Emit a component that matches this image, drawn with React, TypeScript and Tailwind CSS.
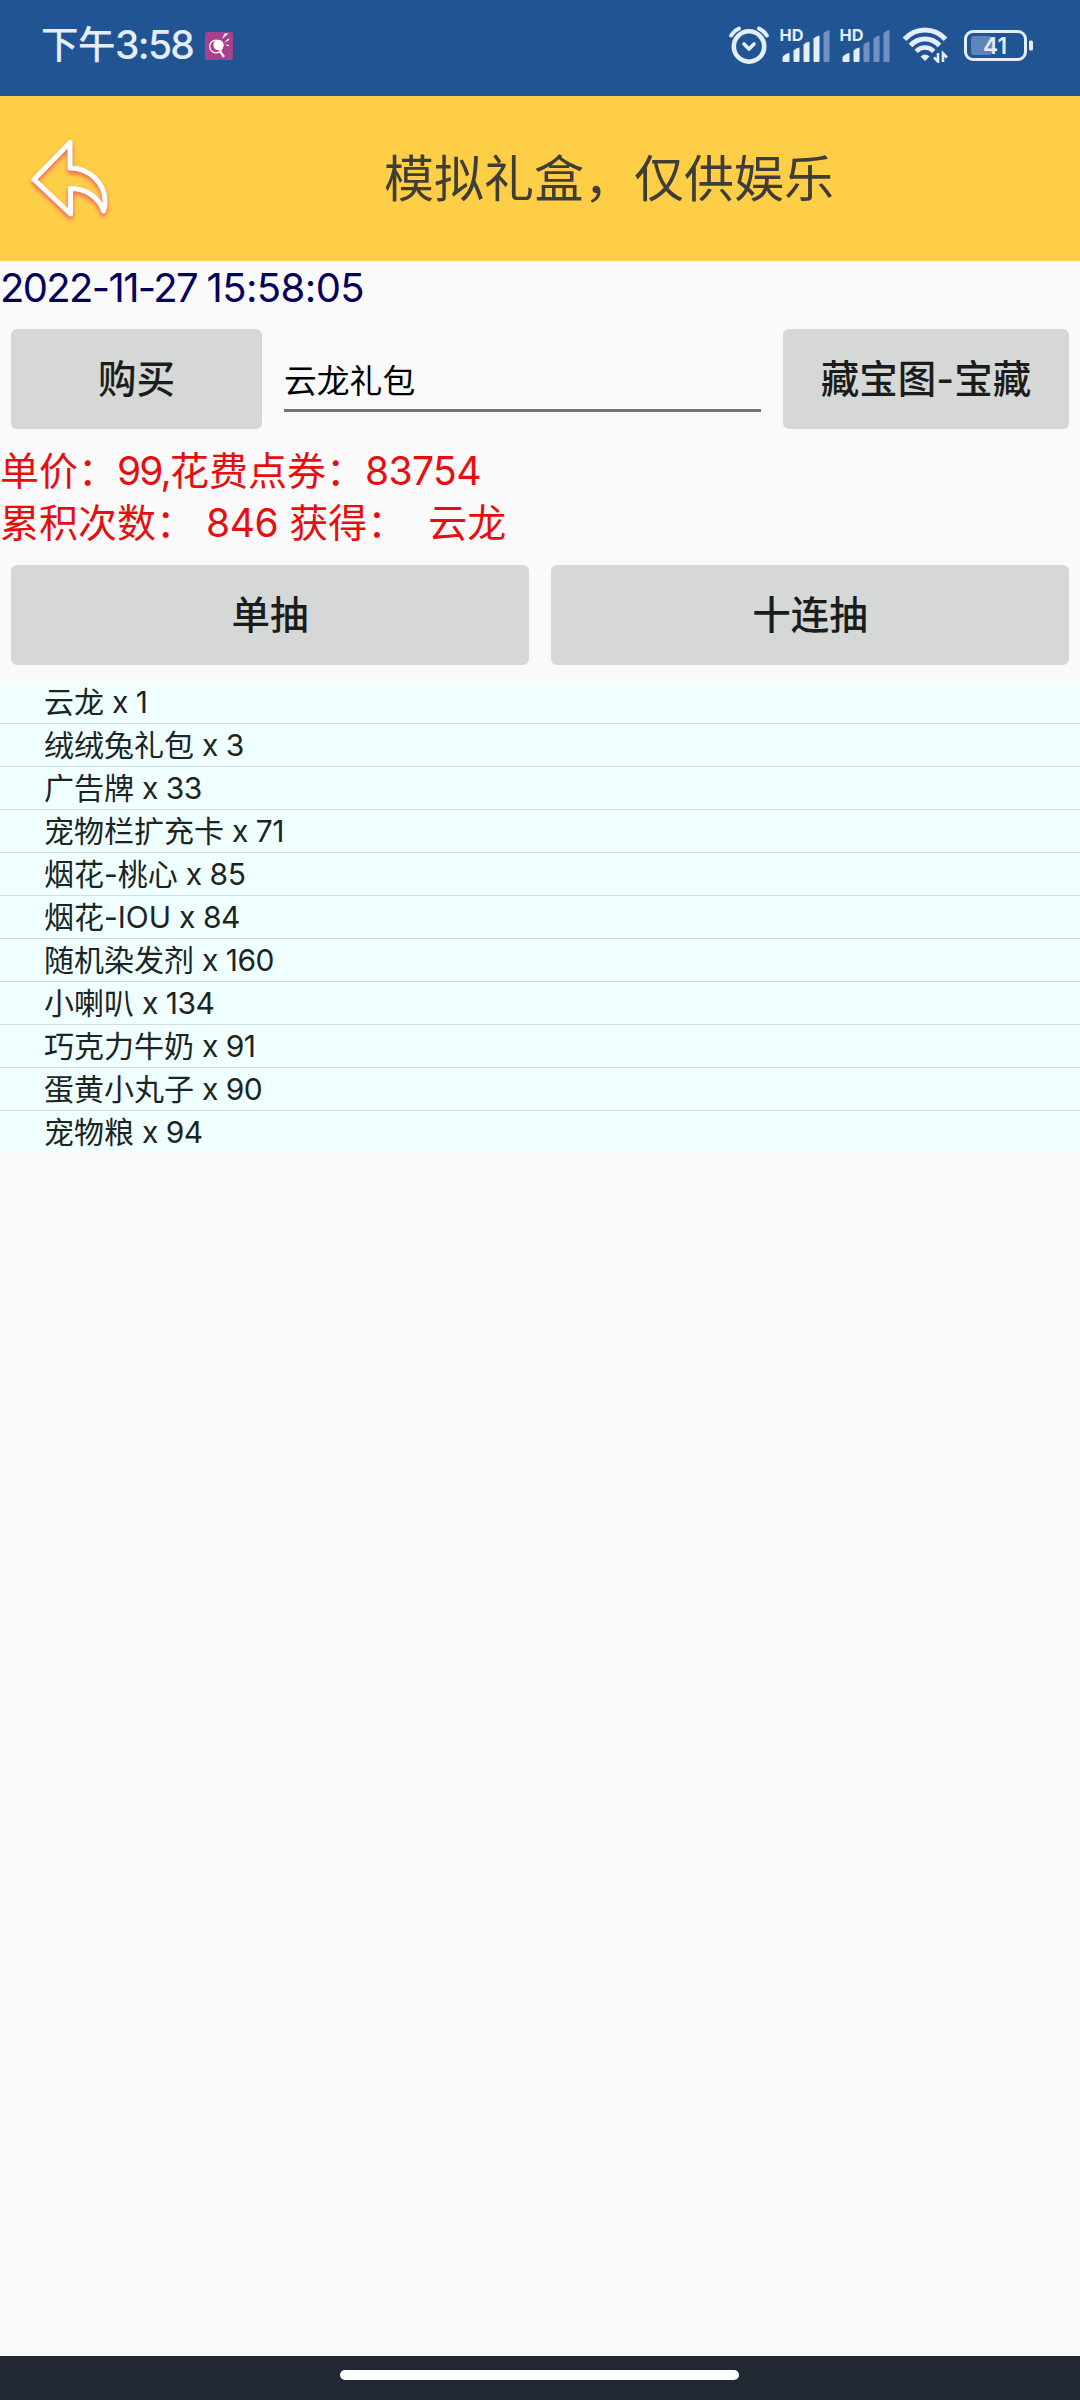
import React from 'react';

interface Prize {
  name: string;
  count: number;
}

const prizes: Prize[] = [
  { name: '云龙', count: 1 },
  { name: '绒绒兔礼包', count: 3 },
  { name: '广告牌', count: 33 },
  { name: '宠物栏扩充卡', count: 71 },
  { name: '烟花-桃心', count: 85 },
  { name: '烟花-IOU', count: 84 },
  { name: '随机染发剂', count: 160 },
  { name: '小喇叭', count: 134 },
  { name: '巧克力牛奶', count: 91 },
  { name: '蛋黄小丸子', count: 90 },
  { name: '宠物粮', count: 94 },
];

function AppBadge() {
  return (
    <svg width="28" height="28" viewBox="0 0 28 28" className="ml-[12px]">
      <rect width="28" height="28" rx="2.500" fill="#a8408f" />
      <circle cx="11" cy="14.500" r="6.300" fill="none" stroke="#fff" strokeWidth="1.300" />
      <circle cx="13.500" cy="13" r="5.200" fill="#fff" />
      <path d="M14.500 18.500l4.500 6.500" stroke="#fff" strokeWidth="2.200" />
      <path d="M17 7l2.500-5.500h4zM19 10.500l4.500-4 1 1.500zM19.500 12.500l4.500.5v1.500z" fill="#fff" />
    </svg>
  );
}

function AlarmIcon() {
  return (
    <svg width="40" height="38" viewBox="0 0 40 38" fill="none" stroke="#e4edfb" strokeLinecap="round" strokeLinejoin="round">
      <circle cx="20" cy="20.500" r="15.200" strokeWidth="4.600" />
      <path d="M2.200 9.500Q5.500 4.500 10 2.500M37.800 9.500Q34.500 4.500 30 2.500" strokeWidth="4" />
      <path d="M15 18l5 5 5-5" strokeWidth="3.600" />
    </svg>
  );
}

const bars = [
  'M1.500 32v-4q3.500-4 7-4v8q0 1-1 1h-5q-1 0-1-1z',
  'M12.500 32v-10.500q3-2.500 6-3v13.500q0 1-1 1h-4q-1 0-1-1z',
  'M22.500 32v-16.500q3-2.500 6-3v19.500q0 1-1 1h-4q-1 0-1-1z',
  'M32.500 32v-22.500q3-2.500 6-3v25.500q0 1-1 1h-4q-1 0-1-1z',
  'M42.500 32v-28q3-2.500 6-3v31q0 1-1 1h-4q-1 0-1-1z',
];

function SignalIcon({ level }: { level: number }) {
  return (
    <svg width="52" height="38" viewBox="-2 -4 52 38" className="overflow-visible">
      {bars.map((d, i) => (
        <path key={i} d={d} fill={i < level ? '#e4edfb' : '#7191c4'} />
      ))}
      <text
        x="-1.500"
        y="12"
        fontSize="16.500"
        fontWeight="700"
        fill="#e4edfb"
        fontFamily="Inter, sans-serif"
        textLength="24"
        lengthAdjust="spacingAndGlyphs"
      >
        HD
      </text>
    </svg>
  );
}

function WifiIcon() {
  return (
    <svg width="48" height="36" viewBox="0 0 48 36" fill="none" stroke="#e4edfb">
      <path d="M2.500 12.200Q11 3 23 3t20.500 9.200" strokeWidth="5" />
      <path d="M8.500 18.500Q14.500 12 23 12t14.500 6.500" strokeWidth="5" />
      <path d="M14.200 24.300Q18 20.500 23 20.500t8.800 3.800" strokeWidth="4.600" />
      <path d="M18.500 29.500Q23 25.500 27.500 29.500L23 34z" fill="#e4edfb" stroke="none" />
      <path d="M36 26v8.500l-4-4M41 35v-8.500l4 4" strokeWidth="2.600" />
    </svg>
  );
}

function BatteryIcon() {
  return (
    <svg width="70" height="31" viewBox="0 0 70 31">
      <rect x="1.500" y="1.500" width="60" height="28" rx="7.500" fill="none" stroke="#e4edfb" strokeWidth="3" />
      <rect x="7" y="6" width="21" height="19" rx="3" fill="#5f84ba" />
      <rect x="65" y="10.500" width="4" height="10" rx="1.500" fill="#e4edfb" />
      <text
        x="19"
        y="24"
        fontSize="23.500"
        fontWeight="600"
        fill="#e4edfb"
        fontFamily="Inter, sans-serif"
        textLength="24"
        lengthAdjust="spacingAndGlyphs"
      >
        41
      </text>
    </svg>
  );
}

function BackArrow() {
  return (
    <svg width="90" height="90" viewBox="0 0 90 90" fill="none" className="mt-[6px] ml-[25px] drop-shadow-[0_3px_2px_#f0605a]">
      <path
        d="M9 42.500L45 5.500V31C66 31 80 48 80 64Q80 70 78.500 74C74 61 62 51.500 45.500 51.500V77z"
        stroke="#fff"
        strokeWidth="5"
        strokeLinejoin="round"
      />
    </svg>
  );
}

function StatusBar() {
  return (
    <div className="flex h-[96px] items-start bg-[#205493] pl-[41px] text-[#e4edfb]">
      <div className="flex h-[91px] items-center">
        <span className="text-[37.5px] font-medium tracking-[-0.5px]">下午</span>
        <span className="text-[39px] font-medium tracking-[-1.7px]">3:58</span>
        <AppBadge />
      </div>
      <div className="ml-auto flex pr-[46px] pt-[26px]">
        <AlarmIcon />
        <div className="ml-[10px] -mt-px">
          <SignalIcon level={4} />
        </div>
        <div className="ml-[8px] -mt-px">
          <SignalIcon level={2} />
        </div>
        <div className="ml-[11px] mt-px">
          <WifiIcon />
        </div>
        <div className="ml-[14px] mt-[4px]">
          <BatteryIcon />
        </div>
      </div>
    </div>
  );
}

function Button({ className, children }: { className: string; children: React.ReactNode }) {
  return (
    <button
      className={`h-[100px] rounded-[6px] bg-[#d6d8d7] text-[38.5px] font-medium leading-none text-[#1b1d1c] ${className}`}
    >
      {children}
    </button>
  );
}

export default function App() {
  return (
    <div className="flex h-[2400px] w-[1080px] flex-col bg-[#fafafa] font-[Inter,'Noto_Sans_CJK_SC',sans-serif]">
      <StatusBar />

      <header className="flex h-[165px] items-center bg-[#ffce47]">
        <BackArrow />
        <h1 className="ml-[269px] pt-px text-[50px] leading-none text-[#3f3d38]">模拟礼盒，仅供娱乐</h1>
      </header>

      <div className="h-[52px] whitespace-pre pt-px text-[40px] leading-[52px] text-[#05005c]">
        <span className="tracking-[-1.65px]">2022-11-27 </span>
        <span className="tracking-[-0.6px]">15:58:05</span>
      </div>

      <div className="mt-[16px] flex px-[11px]">
        <Button className="w-[251px]">购买</Button>
        <div className="mx-[22px] flex h-[83px] flex-1 items-end border-b-3 border-[#747474] pb-[9px] text-[32.8px] leading-[37px] text-black">
          云龙礼包
        </div>
        <Button className="w-[286px]">藏宝图-宝藏</Button>
      </div>

      <div className="mt-[16px] whitespace-pre text-[39px] leading-[52px] text-[#e60f0f]">
        <div>
          单价：<span className="tracking-[-1.9px]">99,</span>花费点券：<span className="tracking-[-0.6px]">83754</span>
        </div>
        <div>
          累积次数： <span className="tracking-[-0.4px]">846</span> 获得：{'  '}云龙
        </div>
      </div>

      <div className="mt-[16px] flex gap-[22px] px-[11px]">
        <Button className="flex-1">单抽</Button>
        <Button className="flex-1">十连抽</Button>
      </div>

      <ul className="mt-[16px] divide-y divide-[#d2dfe0] bg-[#f0ffff] text-[30px] text-[#1c2424]">
        {prizes.map((prize) => (
          <li key={prize.name} className="box-content h-[42px] whitespace-pre pl-[44px] leading-[42px]">
            {prize.name}
            <span className="tracking-[-0.5px]"> x {prize.count}</span>
          </li>
        ))}
      </ul>

      <footer className="mt-auto flex h-[44px] justify-center bg-[#222932] pt-[14px] pr-px">
        <div className="h-[10px] w-[399px] rounded-full bg-white" />
      </footer>
    </div>
  );
}
